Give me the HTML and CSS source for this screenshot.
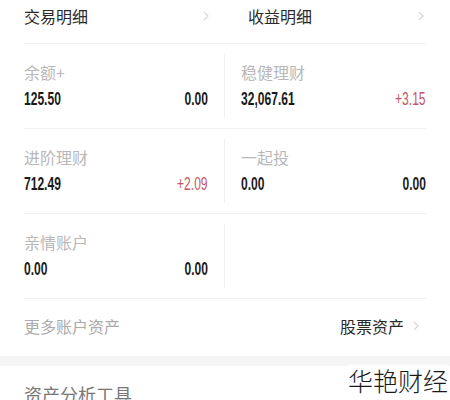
FILE: index.html
```html
<html><head>
<meta charset="UTF-8">
<meta name="viewport" content="width=device-width, initial-scale=1.0">
<title>资产</title>
<link rel="stylesheet" href="styles.css">
</head>
<body>
  <div class="page">
    <div class="nav-row">
      <a href="#" class="nav-item nav-left">
        <span>交易明细</span>
        <svg class="chevron" width="6" height="10" viewBox="0 0 6 10"><path d="M1 1l4 4-4 4" fill="none" stroke="#d6d6d6" stroke-width="1.2"/></svg>
      </a>
      <a href="#" class="nav-item nav-right">
        <span>收益明细</span>
        <svg class="chevron" width="6" height="10" viewBox="0 0 6 10"><path d="M1 1l4 4-4 4" fill="none" stroke="#d6d6d6" stroke-width="1.2"/></svg>
      </a>
    </div>

    <div class="asset-row">
      <div class="cell cell-left">
        <div class="cell-label">余额+</div>
        <div class="cell-values"><span class="num">125.50</span><span class="num num-end">0.00</span></div>
      </div>
      <div class="cell cell-right">
        <div class="cell-label">稳健理财</div>
        <div class="cell-values"><span class="num">32,067.61</span><span class="num num-end up">+3.15</span></div>
      </div>
    </div>

    <div class="asset-row">
      <div class="cell cell-left">
        <div class="cell-label">进阶理财</div>
        <div class="cell-values"><span class="num">712.49</span><span class="num num-end up">+2.09</span></div>
      </div>
      <div class="cell cell-right">
        <div class="cell-label">一起投</div>
        <div class="cell-values"><span class="num">0.00</span><span class="num num-end">0.00</span></div>
      </div>
    </div>

    <div class="asset-row">
      <div class="cell cell-left">
        <div class="cell-label">亲情账户</div>
        <div class="cell-values"><span class="num">0.00</span><span class="num num-end">0.00</span></div>
      </div>
      <div class="cell cell-right"></div>
    </div>

    <div class="more-row">
      <span class="more-label">更多账户资产</span>
      <a href="#" class="more-link">
        <span>股票资产</span>
        <svg class="chevron" width="6" height="10" viewBox="0 0 6 10"><path d="M1 1l4 4-4 4" fill="none" stroke="#d6d6d6" stroke-width="1.2"/></svg>
      </a>
    </div>
  </div>

  <div class="gap-band"></div>

  <div class="page">
    <div class="section-title">资产分析工具</div>
  </div>

  <div class="watermark">华艳财经</div>
</body></html>
```

FILE: styles.css
```css
:root {
  --text-color: #2a2a2a;
  --label-color: #b8b8b8;
  --line-color: #f0f0f0;
  --up-color: #c75560;
}

body {
  margin: 0;
  background: #fff;
  font-family: 'Noto Sans CJK SC', sans-serif;
  color: var(--text-color);
  overflow: hidden;
}

.page {
  margin: 0 24px;
}

.nav-row {
  display: grid;
  grid-template-columns: 1fr 1fr;
  height: 43px;
  border-bottom: 1px solid var(--line-color);
}

.nav-item {
  display: flex;
  justify-content: space-between;
  align-items: flex-start;
  color: var(--text-color);
  text-decoration: none;
  font-size: 16px;
  line-height: 32px;
}

.nav-left {
  padding-right: 16px;
}

.nav-right {
  padding-left: 23px;
  padding-right: 2px;
}

.chevron {
  margin-top: 11px;
}

.asset-row {
  display: grid;
  grid-template-columns: 1fr 1fr;
  border-bottom: 1px solid var(--line-color);
  padding: 10px 0 10px;
}

.cell {
  padding: 7px 0 8px;
}

.cell-left {
  padding-right: 16px;
  border-right: 1px solid var(--line-color);
}

.cell-right {
  padding-left: 16px;
}

.cell-label {
  color: var(--label-color);
  font-size: 16px;
  line-height: 22px;
}

.cell-values {
  display: flex;
  justify-content: space-between;
  margin-top: 5px;
  line-height: 22px;
  font-family: 'Liberation Sans', sans-serif;
  font-size: 18px;
  font-weight: bold;
  color: #1a1a1a;
}

/* 數字字形較窄，用水平壓縮模擬 */
.num {
  display: inline-block;
  transform: scaleX(0.67);
  transform-origin: left center;
}

.num-end {
  transform-origin: right center;
}

.cell-values .up {
  color: var(--up-color);
  font-weight: normal;
}

.more-row {
  display: flex;
  justify-content: space-between;
  align-items: center;
  padding: 16px 7px 19px 0;
  line-height: 22px;
  font-size: 16px;
}

.more-label {
  color: #aaa;
}

.more-link {
  display: flex;
  align-items: center;
  gap: 9px;
  color: var(--text-color);
  text-decoration: none;
}

.more-link .chevron {
  margin-top: 0;
}

.gap-band {
  height: 10px;
  background: #f5f5f5;
}

.section-title {
  padding-top: 17px;
  font-size: 18px;
  line-height: 22px;
  color: #777;
}

.watermark {
  position: absolute;
  right: 2px;
  top: 364px;
  font-size: 25px;
  font-weight: 300;
  line-height: 32px;
  color: #1a1a1a;
  background: rgba(255, 255, 255, 0.6);
}
```
